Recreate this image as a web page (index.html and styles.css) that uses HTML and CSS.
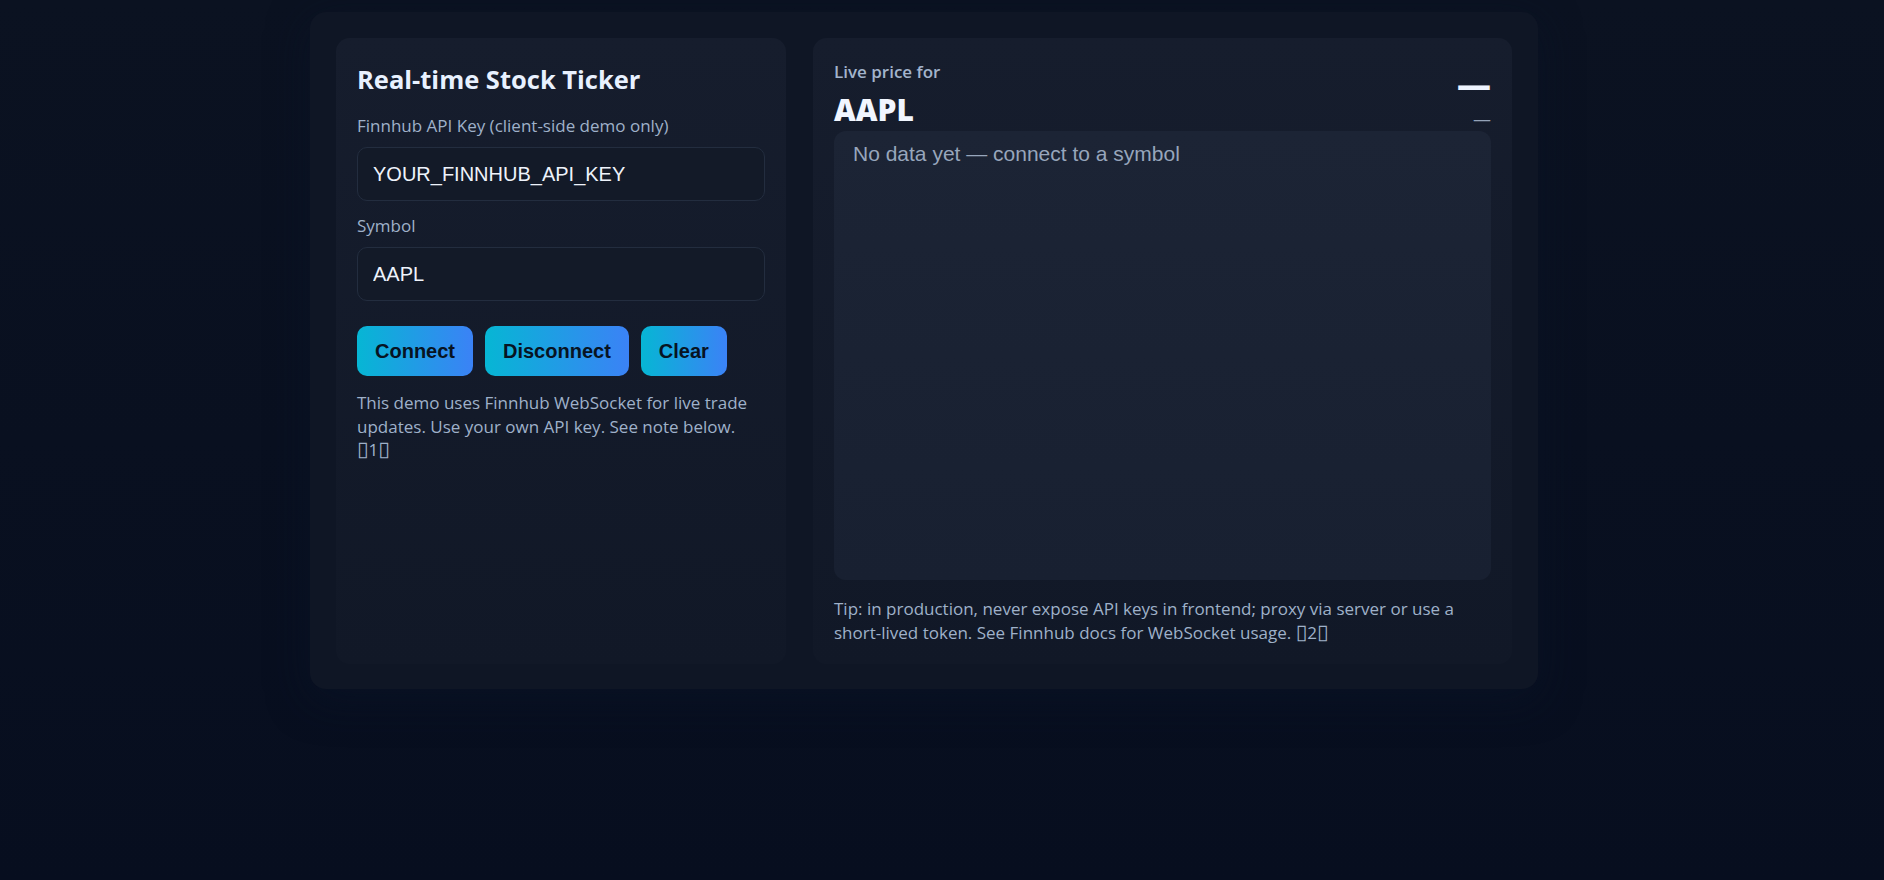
FILE: index.html
```html
<!DOCTYPE html>
<html lang="en">
<head>
<meta charset="utf-8">
<title>Real-time Stock Ticker</title>
<link rel="stylesheet" href="styles.css">
</head>
<body>
<main class="app">
  <section class="panel controls">
    <h1 class="title">Real-time Stock Ticker</h1>
    <div class="field">
      <label class="label" for="key">Finnhub API Key (client-side demo only)</label>
      <input class="input" id="key" type="text" value="YOUR_FINNHUB_API_KEY">
    </div>
    <div class="field">
      <label class="label" for="sym">Symbol</label>
      <input class="input" id="sym" type="text" value="AAPL">
    </div>
    <div class="buttons">
      <button class="btn">Connect</button>
      <button class="btn">Disconnect</button>
      <button class="btn">Clear</button>
    </div>
    <p class="note">This demo uses Finnhub WebSocket for live trade updates. Use your own API key. See note below. <span class="cite"><span class="box">▯</span>1<span class="box">▯</span></span></p>
  </section>
  <section class="panel live">
    <div class="live-head">
      <div class="live-id">
        <div class="live-label">Live price for</div>
        <div class="live-symbol">AAPL</div>
      </div>
      <div class="live-price">
        <div class="price">—</div>
        <div class="change">—</div>
      </div>
    </div>
    <div class="feed">No data yet — connect to a symbol</div>
    <p class="tip">Tip: in production, never expose API keys in frontend; proxy via server or use a short-lived token. See Finnhub docs for WebSocket usage. <span class="cite"><span class="box">▯</span>2<span class="box">▯</span></span></p>
  </section>
</main>
</body>
</html>
```

FILE: styles.css
```css
* { box-sizing: border-box; }

html, body { height: 100%; }

body {
  margin: 0;
  background: linear-gradient(180deg, #0b1221 0%, #070e1f 100%);
  font-family: "Open Sans", "Noto Sans", sans-serif;
  color: #e6eefc;
}

.app {
  width: 1228px;
  margin: 12px 0 0 310px;
  padding: 26px 26px 25px;
  display: grid;
  grid-template-columns: 450px 1fr;
  gap: 27px;
  background: #0f1625;
  border-radius: 16px;
  box-shadow: 0 10px 40px rgba(10, 20, 40, 0.55);
}

.panel {
  background: linear-gradient(180deg, #161d2d 0%, #111827 100%);
  border-radius: 14px;
}

.controls {
  padding: 24px 21px 20px;
}

.title {
  margin: 0 0 19px;
  font-size: 25.5px;
  line-height: 34px;
  font-weight: 700;
  color: #e8f1ff;
}

.field + .field { margin-top: 14px; }

.label {
  display: block;
  margin-bottom: 10px;
  font-size: 17px;
  line-height: 22px;
  color: #9fb1c9;
}

.input {
  display: block;
  width: 100%;
  height: 54px;
  padding: 0 15px;
  background: #131a28;
  border: 1px solid #232d3f;
  border-radius: 10px;
  color: #eef3fb;
  font-family: "Liberation Sans", Arial, sans-serif;
  font-size: 20px;
  outline: none;
}

.buttons {
  display: flex;
  gap: 12px;
  margin-top: 25px;
}

.btn {
  height: 50px;
  padding: 0 18px;
  border: 0;
  border-radius: 10px;
  background: linear-gradient(90deg, #06b6d4 0%, #3b82f6 100%);
  color: #071322;
  font-family: "Liberation Sans", Arial, sans-serif;
  font-size: 20px;
  font-weight: 700;
}

.note {
  margin: 15px 0 0;
  font-size: 17px;
  line-height: 23.5px;
  color: #9fb1c9;
}

.cite {
  white-space: nowrap;
}

.box {
  font-family: "DejaVu Sans", sans-serif;
  font-size: 21px;
  line-height: 0;
}

.live {
  padding: 23px 21px 20px;
  display: flex;
  flex-direction: column;
}

.live-head {
  display: flex;
  justify-content: space-between;
  align-items: flex-start;
  height: 66px;
}

.live-label {
  font-size: 17px;
  line-height: 22px;
  font-weight: 600;
  color: #a3b4cc;
}

.live-symbol {
  margin-top: 10px;
  font-size: 30px;
  line-height: 34px;
  font-weight: 800;
  color: #f1f6ff;
}

.live-price {
  display: flex;
  flex-direction: column;
  align-items: flex-end;
}

.price {
  margin-top: 5px;
  font-size: 34px;
  line-height: 36px;
  font-weight: 800;
  color: #eef4ff;
}

.change {
  margin-top: 8px;
  font-size: 18px;
  line-height: 18px;
  color: #94a3b8;
}

.feed {
  height: 449px;
  margin-top: 4px;
  padding: 11px 19px;
  border-radius: 12px;
  background: linear-gradient(180deg, #1c2435 0%, #182031 100%);
  color: #97a6bc;
  font-family: "Liberation Sans", Arial, sans-serif;
  font-size: 21px;
  line-height: 24px;
}

.tip {
  margin: 17px 0 0;
  font-size: 17px;
  line-height: 23.5px;
  color: #9fb1c9;
}
```
